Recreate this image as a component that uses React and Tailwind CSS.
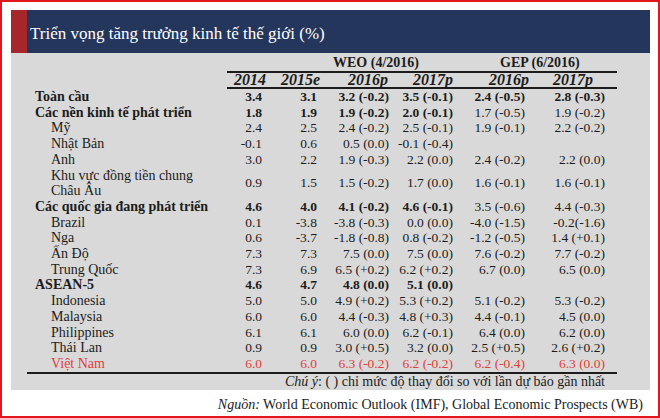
import React from "react";

const rows = [
  { label: "Toàn cầu", lvl: 0, v: ["3.4", "3.1", "3.2 (-0.2)", "3.5 (-0.1)", "2.4 (-0.5)", "2.8 (-0.3)"], b: [1, 1, 1, 1, 1, 1] },
  { label: "Các nền kinh tế phát triển", lvl: 0, v: ["1.8", "1.9", "1.9 (-0.2)", "2.0 (-0.1)", "1.7 (-0.5)", "1.9 (-0.2)"], b: [1, 1, 1, 1, 0, 0] },
  { label: "Mỹ", lvl: 1, v: ["2.4", "2.5", "2.4 (-0.2)", "2.5 (-0.1)", "1.9 (-0.1)", "2.2 (-0.2)"] },
  { label: "Nhật Bản", lvl: 1, v: ["-0.1", "0.6", "0.5 (0.0)", "-0.1 (-0.4)", "", ""] },
  { label: "Anh", lvl: 1, v: ["3.0", "2.2", "1.9 (-0.3)", "2.2 (0.0)", "2.4 (-0.2)", "2.2 (0.0)"] },
  { label: "Khu vực đồng tiền chung", label2: "Châu Âu", lvl: 1, v: ["0.9", "1.5", "1.5 (-0.2)", "1.7 (0.0)", "1.6 (-0.1)", "1.6 (-0.1)"] },
  { label: "Các quốc gia đang phát triển", lvl: 0, v: ["4.6", "4.0", "4.1 (-0.2)", "4.6 (-0.1)", "3.5 (-0.6)", "4.4 (-0.3)"], b: [1, 1, 1, 1, 0, 0] },
  { label: "Brazil", lvl: 1, v: ["0.1", "-3.8", "-3.8 (-0.3)", "0.0 (0.0)", "-4.0 (-1.5)", "-0.2(-1.6)"] },
  { label: "Nga", lvl: 1, v: ["0.6", "-3.7", "-1.8 (-0.8)", "0.8 (-0.2)", "-1.2 (-0.5)", "1.4 (+0.1)"] },
  { label: "Ấn Độ", lvl: 1, v: ["7.3", "7.3", "7.5 (0.0)", "7.5 (0.0)", "7.6 (-0.2)", "7.7 (-0.2)"] },
  { label: "Trung Quốc", lvl: 1, v: ["7.3", "6.9", "6.5 (+0.2)", "6.2 (+0.2)", "6.7 (0.0)", "6.5 (0.0)"] },
  { label: "ASEAN-5", lvl: 0, v: ["4.6", "4.7", "4.8 (0.0)", "5.1 (0.0)", "", ""], b: [1, 1, 1, 1, 0, 0] },
  { label: "Indonesia", lvl: 1, v: ["5.0", "5.0", "4.9 (+0.2)", "5.3 (+0.2)", "5.1 (-0.2)", "5.3 (-0.2)"] },
  { label: "Malaysia", lvl: 1, v: ["6.0", "6.0", "4.4 (-0.3)", "4.8 (+0.3)", "4.4 (-0.1)", "4.5 (0.0)"] },
  { label: "Philippines", lvl: 1, v: ["6.1", "6.1", "6.0 (0.0)", "6.2 (-0.1)", "6.4 (0.0)", "6.2 (0.0)"] },
  { label: "Thái Lan", lvl: 1, v: ["0.9", "0.9", "3.0 (+0.5)", "3.2 (0.0)", "2.5 (+0.5)", "2.6 (+0.2)"] },
  { label: "Việt Nam", lvl: 1, red: true, v: ["6.0", "6.0", "6.3 (-0.2)", "6.2 (-0.2)", "6.2 (-0.4)", "6.3 (0.0)"] },
];

const valPads = ["pr-[8px]", "pr-[8px]", "pr-[6px]", "pr-[7px]", "pr-[15px]", "pr-[12px]"];
const headPads = ["pr-[4px]", "pr-[5px]", "pr-[7px]", "pr-[7px]", "pr-[11px]", "pr-[24px]"];
const years = ["2014", "2015e", "2016p", "2017p", "2016p", "2017p"];
const gridCols = "grid grid-cols-[200px_43px_55px_70px_65px_80px_77px] items-center";
const yearCols = "grid grid-cols-[43px_55px_70px_65px_80px_77px]";

function Row({ r }) {
  const color = r.red ? "text-[#e0403a]" : "text-[#1c1c1c]";
  return (
    <div className={`${gridCols} ${color} leading-[15.7px]`}>
      <div className={`${r.lvl === 0 ? "pl-[8px] font-bold" : "pl-[24px]"} whitespace-nowrap`}>
        <div>{r.label}</div>
        {r.label2 && <div>{r.label2}</div>}
      </div>
      {r.v.map((val, i) => (
        <div
          key={i}
          className={`text-right whitespace-nowrap text-[13.5px] ${valPads[i]} ${r.b && r.b[i] ? "font-bold" : ""}`}
        >
          {val}
        </div>
      ))}
    </div>
  );
}

export default function App() {
  return (
    <div className="w-[660px] h-[418px] bg-white border-2 border-[#e3161d] font-['Liberation_Serif',serif] text-[#1c1c1c]">
      <div className="ml-[9px] mt-[8px] w-[639px]">
        {/* Title bar */}
        <div className="flex h-[43px]">
          <div className="w-[16px] bg-[#a6262c]" />
          <div className="flex-1 bg-[#24365c] flex items-center pl-[3px] pt-[3px]">
            <span className="text-white text-[17px] leading-none">
              Triển vọng tăng trưởng kinh tế thế giới (%)
            </span>
          </div>
        </div>
        {/* Gray body */}
        <div className="bg-[#d9d9d9] h-[337px] pl-[16px] text-[14px]">
          <div className="w-[590px]">
            <div className="ml-[200px] w-[390px] border-b-2 border-[#1c1c1c] pt-[2px] leading-[16px] font-bold flex">
              <span className="w-[273px] pl-[106px] whitespace-nowrap">WEO (4/2016)</span>
              <span className="whitespace-nowrap">GEP (6/2016)</span>
            </div>
            <div className={`ml-[200px] w-[390px] border-b-2 border-[#1c1c1c] leading-[14px] font-bold italic text-[16px] ${yearCols}`}>
              {years.map((y, i) => (
                <div key={i} className={`text-right ${headPads[i]}`}>{y}</div>
              ))}
            </div>
            <div className="border-b-2 border-[#1c1c1c]">
              {rows.map((r, i) => (
                <Row key={i} r={r} />
              ))}
            </div>
            <div className="text-right pr-[12px] leading-[16px] whitespace-nowrap">
              <span className="italic">Chú ý</span>: ( ) chỉ mức độ thay đổi so với lần dự báo gần nhất
            </div>
          </div>
        </div>
        <div className="text-right pr-[7px] pt-[7px] leading-[16px] text-[14px] whitespace-nowrap">
          <span className="italic">Nguồn:</span> World Economic Outlook (IMF), Global Economic Prospects (WB)
        </div>
      </div>
    </div>
  );
}
